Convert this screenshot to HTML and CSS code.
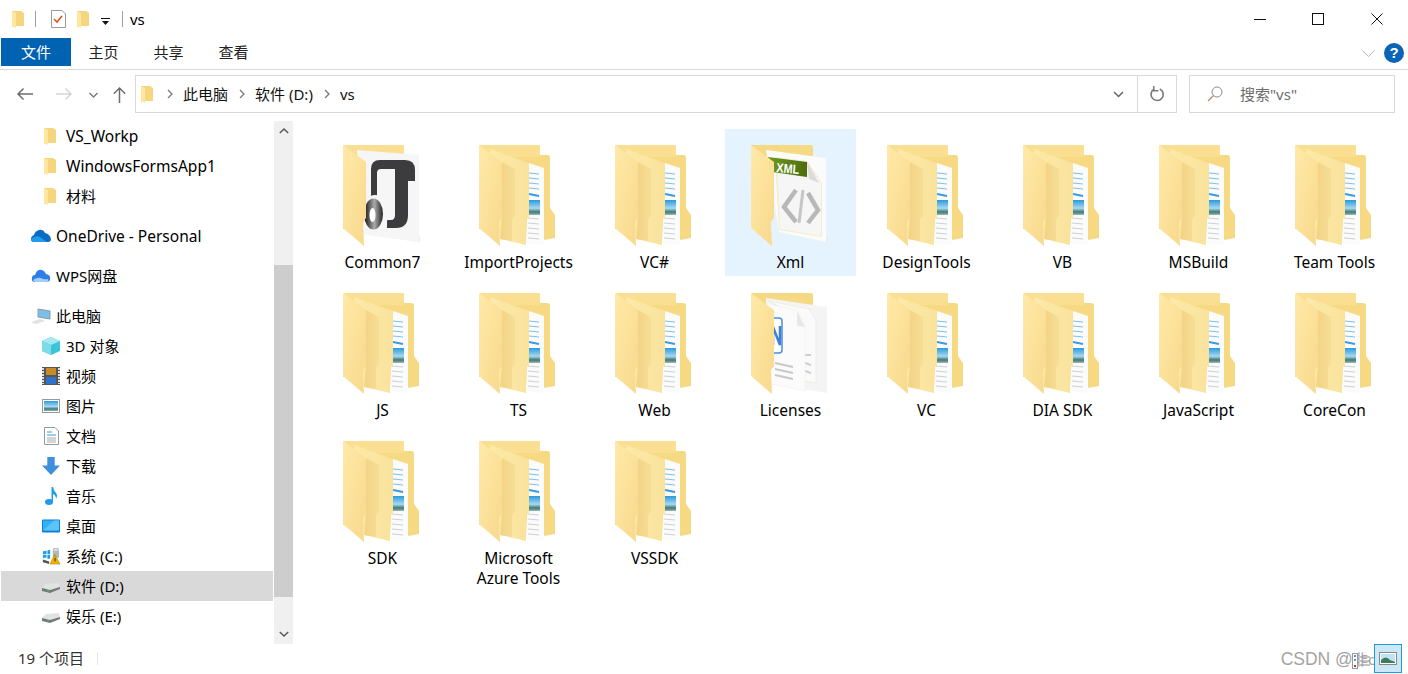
FILE: index.html
```html
<!DOCTYPE html>
<html lang="zh-CN">
<head>
<meta charset="utf-8">
<title>vs</title>
<link rel="stylesheet" href="styles.css">
</head>
<body>
<svg class="defs" width="0" height="0" aria-hidden="true">
  <defs>
    <linearGradient id="flap" x1="0" y1="0" x2="1" y2="1"><stop offset="0" stop-color="#ffeaa8"/><stop offset="1" stop-color="#f8d88c"/></linearGradient>
    <linearGradient id="mid" x1="0" y1="0" x2="1" y2="0"><stop offset="0" stop-color="#fdeaa9"/><stop offset="1" stop-color="#f9e29c"/></linearGradient>
    <linearGradient id="shade" x1="0" y1="0" x2="1" y2="0"><stop offset="0" stop-color="#f3d384"/><stop offset="1" stop-color="#f7dd96"/></linearGradient>
    <linearGradient id="sky" x1="0" y1="0" x2="0" y2="1"><stop offset="0" stop-color="#2a9ae0"/><stop offset=".55" stop-color="#a8d8ef"/><stop offset=".8" stop-color="#3e7a70"/><stop offset="1" stop-color="#9fb8c0"/></linearGradient>
    <linearGradient id="ring" x1="0" y1="0" x2="1" y2="0"><stop offset="0" stop-color="#111"/><stop offset=".55" stop-color="#aaa"/><stop offset="1" stop-color="#222"/></linearGradient>
    <linearGradient id="banner" x1="0" y1="0" x2="1" y2="0"><stop offset="0" stop-color="#6f9a22"/><stop offset="1" stop-color="#4c6c0e"/></linearGradient>
    <symbol id="flapshape" viewBox="0 0 77 102">
      <path d="M0 0 23 17V73L20 77 21 101 0 83Z" fill="url(#flap)"/>
    </symbol>
    <symbol id="backshape" viewBox="0 0 77 102">
      <path d="M0 0H60Q61 0 61 2V10H68Q71 10 71 13V63L76 70V93L65 95 40 90 0 84Z" fill="#f6d983"/>
      <path d="M0 0H60Q61 0 61 2V12H0Z" fill="#fadf93"/>
    </symbol>
    <symbol id="folder" viewBox="0 0 77 102">
      <use href="#backshape"/>
      <path d="M50 18 65 23V100L47 98Z" fill="#fbfbfb"/>
      <path d="M50 28 60 29M50 33 60 34M50 38 60 39M50 43 60 44" stroke="#7cc0ee" stroke-width="1"/>
      <path d="M50 49 60 51" stroke="#3a9ae6" stroke-width="2"/>
      <rect x="50" y="55" width="11" height="15" fill="url(#sky)"/>
      <path d="M49 73 60 74M49 78 60 79M49 83 60 84M49 88 60 89M49 93 60 94" stroke="#cdd0d4" stroke-width="1"/>
      <path d="M11 4 50 18V72L47 75V100L21 94Z" fill="url(#mid)"/>
      <path d="M23 17 36 24V70L33 75V96L21 94 23 73Z" fill="url(#shade)"/>
      <use href="#flapshape"/>
    </symbol>
    <symbol id="common" viewBox="0 0 77 102">
      <use href="#backshape"/>
      <path d="M20 89 76 97 86 93 70 90Z" fill="#ececec"/>
      <path d="M14 5 76 10V97L20 89Z" fill="#f6f6f7"/>
      <path d="M28 58V24Q28 15 37 15H62Q72 15 72 25V36H65V70Q65 83 53 83H44V75H48Q52 75 52 70V24H38Q34 24 34 28V58Z" fill="#3c3c3e"/>
      <ellipse cx="32" cy="69" rx="13" ry="19" fill="#f6f6f7"/>
      <ellipse cx="30.500" cy="69" rx="9.500" ry="15.500" fill="url(#ring)"/>
      <ellipse cx="29.500" cy="70" rx="3" ry="7" fill="#fff"/>
      <use href="#flapshape"/>
    </symbol>
    <symbol id="xmlfolder" viewBox="0 0 77 102">
      <path d="M0 0H60Q62 0 62 2V14L0 14Z" fill="#f6d983"/>
      <path d="M28 87 75 97 86 93 70 90Z" fill="#ececec"/>
      <path d="M15 5 75 13V97L28 87Z" fill="#fbfbfb"/>
      <path d="M24 12 56 16 71 38V92L28 85Z" fill="#f5eccb"/>
      <path d="M26 14 55 18 70 38V91L29 84Z" fill="#f6f6f6"/>
      <path d="M56 17 58 34 68 38Z" fill="#dcdcdc"/>
      <path d="M17 12 56 17V32L21 27Z" fill="url(#banner)"/>
      <text class="xml-text" x="25" y="27" textLength="23" lengthAdjust="spacingAndGlyphs" transform="rotate(5 25 27)">XML</text>
      <path d="M45 45 33 62 45 77M57 48 67 65 57 78" fill="none" stroke="#b8b8b8" stroke-width="4.500"/>
      <path d="M52 45 48 78" fill="none" stroke="#c6c6c6" stroke-width="3"/>
      <use href="#flapshape"/>
    </symbol>
    <symbol id="licfolder" viewBox="0 0 77 102">
      <path d="M0 0H60Q62 0 62 2V12H0Z" fill="#f6d983"/>
      <path d="M15 5 76 14V100L15 90Z" fill="#f4f4f5"/>
      <path d="M18 8 58 16 65 27V90L40 86V20Z" fill="#fafafa" stroke="#e9e3cf" stroke-width=".5"/>
      <path d="M54 62 60 62M54 70 60 72M54 78 60 80" stroke="#cfcfcf" stroke-width="2"/>
      <path d="M15 10 46 18 54 30V98L16 90Z" fill="#fbfbfb" stroke="#ececec" stroke-width=".5"/>
      <path d="M46 18 46 33 54 34Z" fill="#e8e8e8"/>
      <rect x="20" y="25" width="11" height="35" rx="3" fill="#fff" stroke="#4a8fe8" stroke-width="1.500"/>
      <path d="M22 52V34L29 52V33" fill="none" stroke="#3f7fd8" stroke-width="2.500"/>
      <path d="M24 70 42 74M24 76 42 80M24 82 42 86" stroke="#c8c8c8" stroke-width="2"/>
      <use href="#flapshape"/>
    </symbol>
    <symbol id="mini" viewBox="0 0 12 17">
      <path d="M0 0H9L12 2V15H3L0 16Z" fill="#f5d57e"/>
      <path d="M0 0 4 2V17L0 15Z" fill="#ffe7a0"/>
    </symbol>
    <symbol id="disk" viewBox="0 0 18 10">
      <path d="M0 5 4 1 17 0 18 5 5 9Z" fill="#e2e2e2"/>
      <path d="M0 5 8 7 18 4V6L8 10 0 8Z" fill="#777"/>
      <path d="M5 7.500 7 8" stroke="#3fb54a" stroke-width="1.500"/>
    </symbol>
  </defs>
</svg>

<header class="titlebar">
  <svg class="t-folder"><use href="#mini"/></svg>
  <span class="t-sep"></span>
  <svg class="t-doc" viewBox="0 0 15 18"><path d="M.5.500H11L14.500 4V17.500H.5Z" fill="#fff" stroke="#9a9a9a"/><path d="M3 9 6 12 11 6" fill="none" stroke="#e2541f" stroke-width="1.600"/></svg>
  <svg class="t-folder t-folder2"><use href="#mini"/></svg>
  <svg class="t-drop" viewBox="0 0 9 7"><path d="M0 0H9V1H0ZM1 3H8L4.500 7Z" fill="#111"/></svg>
  <span class="t-sep t-sep2"></span>
  <span class="t-name">vs</span>
  <div class="win">
    <svg class="w-min" viewBox="0 0 12 1"><path d="M0 .5H12" stroke="#111"/></svg>
    <svg class="w-max" viewBox="0 0 12 12"><rect x=".5" y=".5" width="11" height="11" fill="none" stroke="#111"/></svg>
    <svg class="w-close" viewBox="0 0 12 12"><path d="M.5.500 11.500 11.500M11.500.5.500 11.500" stroke="#111"/></svg>
  </div>
</header>

<nav class="ribbon">
  <span class="tab tab-file">文件</span>
  <span class="tab">主页</span>
  <span class="tab">共享</span>
  <span class="tab">查看</span>
  <div class="ribbon-right">
    <svg class="r-chev" viewBox="0 0 13 7"><path d="M.5.500 6.500 6.500 12.500.5" fill="none" stroke="#b5b5b5"/></svg>
    <span class="help">?</span>
  </div>
</nav>

<div class="addr-row">
  <div class="nav-btns">
    <svg class="n-back" viewBox="0 0 16 12"><path d="M1 6H16M6.500.5 1 6 6.500 11.500" fill="none" stroke="#6d6d6d" stroke-width="1.500"/></svg>
    <svg class="n-fwd" viewBox="0 0 16 12"><path d="M0 6H15M9.500.5 15 6 9.500 11.500" fill="none" stroke="#d6d6d6" stroke-width="1.500"/></svg>
    <svg class="n-down" viewBox="0 0 9 6"><path d="M.5 1 4.500 5 8.500 1" fill="none" stroke="#7b7b7b" stroke-width="1.500"/></svg>
    <svg class="n-up" viewBox="0 0 13 16"><path d="M6.500 16V1M.8 6.700 6.500 1 12.200 6.700" fill="none" stroke="#6d6d6d" stroke-width="1.500"/></svg>
  </div>
  <div class="addr">
    <svg class="a-folder"><use href="#mini"/></svg>
    <svg class="crumb-chev" viewBox="0 0 6 10"><path d="M1 1 5 5 1 9" fill="none" stroke="#777" stroke-width="1.300"/></svg>
    <span class="crumb">此电脑</span>
    <svg class="crumb-chev" viewBox="0 0 6 10"><path d="M1 1 5 5 1 9" fill="none" stroke="#777" stroke-width="1.300"/></svg>
    <span class="crumb">软件 (D:)</span>
    <svg class="crumb-chev" viewBox="0 0 6 10"><path d="M1 1 5 5 1 9" fill="none" stroke="#777" stroke-width="1.300"/></svg>
    <span class="crumb">vs</span>
    <svg class="a-drop" viewBox="0 0 11 7"><path d="M1 1 5.500 5.500 10 1" fill="none" stroke="#666" stroke-width="1.500"/></svg>
    <span class="a-refresh">
      <svg class="refresh" viewBox="0 0 16 16"><path d="M10.500 2.600A6.500 6.500 0 1 1 4.500 2.700" fill="none" stroke="#7c7c7c" stroke-width="1.800"/><path d="M4 0V5H9" fill="none" stroke="#7c7c7c" stroke-width="1.600" transform="translate(0 -.5)"/></svg>
    </span>
  </div>
  <div class="search">
    <svg class="s-icon" viewBox="0 0 16 16"><circle cx="10" cy="6" r="5" fill="none" stroke="#8e8e8e"/><path d="M6.500 9.500 1 15" stroke="#b88a5a" stroke-width="1.200"/></svg>
    <span>搜索"vs"</span>
  </div>
</div>

<main class="body">
  <aside class="side">
    <div class="tree">
      <div class="tree-group">
        <div class="row lvl2 latin"><svg class="i-mini"><use href="#mini"/></svg><span>VS_Workp</span></div>
        <div class="row lvl2 latin"><svg class="i-mini"><use href="#mini"/></svg><span>WindowsFormsApp1</span></div>
        <div class="row lvl2"><svg class="i-mini"><use href="#mini"/></svg><span>材料</span></div>
      </div>
      <div class="tree-group">
        <div class="row lvl1 latin"><svg class="i-l1" viewBox="0 0 20 14"><path d="M3 13Q0 13 0 10 0 7 3 6 4 2 8 1 12 0 14 4 19 5 20 10 20 13 17 13Z" fill="#0a6cc7"/><path d="M0 10Q4 6 9 8L16 13H3Q0 13 0 10Z" fill="#1f9de8"/></svg><span>OneDrive - Personal</span></div>
      </div>
      <div class="tree-group">
        <div class="row lvl1"><svg class="i-l1" viewBox="0 0 20 14"><path d="M4 13Q0 13 1 9 1 6 4 6 6 0 11 1 14 2 15 5 20 6 19 10 19 13 15 13Z" fill="#2f7ee8"/><path d="M2 11Q6 8 10 9 13 11 17 10 18 13 15 13H4Q3 13 2 11Z" fill="#9ed0fa"/></svg><span>WPS网盘</span></div>
      </div>
      <div class="tree-group">
        <div class="row lvl1"><svg class="i-l1 i-pc" viewBox="0 0 20 17"><path d="M7 1 19 3V11L7 9Z" fill="#7cc0e8" stroke="#8a9aa8"/><path d="M0 14 9 11 14 13 5 16Z" fill="#dfe2e6"/></svg><span>此电脑</span></div>
        <div class="row lvl2"><svg class="i-l2" viewBox="0 0 18 18"><path d="M9 0 18 4V14L9 18 0 14V4Z" fill="#3cc4d8"/><path d="M0 4 9 8 18 4 9 0Z" fill="#a4eaf2"/><path d="M9 8V18L0 14V4Z" fill="#7cdce8"/></svg><span>3D 对象</span></div>
        <div class="row lvl2"><svg class="i-l2" viewBox="0 0 18 18"><rect width="18" height="18" fill="#555"/><path d="M1 1V17M17 1V17" stroke="#ddd" stroke-width="2" stroke-dasharray="2 1"/><rect x="4" y="1" width="10" height="7" fill="#c98a2a"/><rect x="4" y="10" width="10" height="7" fill="#2f72c8"/></svg><span>视频</span></div>
        <div class="row lvl2"><svg class="i-l2 i-pic" viewBox="0 0 18 14"><rect x=".5" y=".5" width="17" height="13" fill="#fff" stroke="#999"/><rect x="2" y="2" width="14" height="10" fill="url(#sky)"/></svg><span>图片</span></div>
        <div class="row lvl2"><svg class="i-l2 i-doc" viewBox="0 0 15 18"><path d="M.5.500H11L14.500 4V17.500H.5Z" fill="#fff" stroke="#999"/><path d="M3 5H8M3 8H12" stroke="#3b9be0"/><path d="M3 11H12M3 13H12M3 15H12" stroke="#aaa"/></svg><span>文档</span></div>
        <div class="row lvl2"><svg class="i-l2" viewBox="0 0 17 17"><path d="M5 0H12V8H17L8.500 17 0 8H5Z" fill="#3f8fdf"/></svg><span>下载</span></div>
        <div class="row lvl2"><svg class="i-l2" viewBox="0 0 18 18"><ellipse cx="7" cy="15" rx="4" ry="3" fill="#1e9bee"/><path d="M9.500 15V0L11 0Q12 4 14 6T14 12Q14 8 11 7V15Z" fill="#1e9bee"/></svg><span>音乐</span></div>
        <div class="row lvl2"><svg class="i-l2 i-pic" viewBox="0 0 18 13"><rect width="18" height="13" rx="1" fill="#0a7fd8"/><rect x="1" y="1" width="16" height="10" fill="#32b0f2"/><path d="M1 11 12 1H17V11Z" fill="#5cc4f6"/></svg><span>桌面</span></div>
        <div class="row lvl2"><svg class="i-l2" viewBox="0 0 20 18"><path d="M1 4 5 3V7H1ZM6 3 9 2V7H6ZM1 8H5V11H1ZM6 8H9V12H6Z" fill="#1ba1e2"/><path d="M1 13 8 15V18L1 16Z" fill="#555"/><rect x="12" y="3" width="7" height="8" rx="1" fill="#b0b8c0"/><path d="M13 3V1H18V3" fill="none" stroke="#999"/><path d="M14 7 20 18H9Z" fill="#f0b400" stroke="#8a6a00" stroke-width=".5"/><path d="M14.500 11V15" stroke="#222"/></svg><span>系统 (C:)</span></div>
        <div class="row lvl2 row-sel"><svg class="i-l2 i-disk"><use href="#disk"/></svg><span>软件 (D:)</span></div>
        <div class="row lvl2"><svg class="i-l2 i-disk"><use href="#disk"/></svg><span>娱乐 (E:)</span></div>
      </div>
    </div>
    <div class="scrollbar">
      <svg class="sb-arrow" viewBox="0 0 10 6"><path d="M.8 5 5 1 9.200 5" fill="none" stroke="#5c5c5c" stroke-width="1.600"/></svg>
      <div class="sb-track"><div class="sb-thumb"></div></div>
      <svg class="sb-arrow" viewBox="0 0 10 6"><path d="M.8 1 5 5 9.200 1" fill="none" stroke="#5c5c5c" stroke-width="1.600"/></svg>
    </div>
  </aside>
  <section class="files">
    <div class="tile"><svg class="ficon"><use href="#common"/></svg><span>Common7</span></div>
    <div class="tile"><svg class="ficon"><use href="#folder"/></svg><span>ImportProjects</span></div>
    <div class="tile"><svg class="ficon"><use href="#folder"/></svg><span>VC#</span></div>
    <div class="tile tile-hover"><svg class="ficon"><use href="#xmlfolder"/></svg><span>Xml</span></div>
    <div class="tile"><svg class="ficon"><use href="#folder"/></svg><span>DesignTools</span></div>
    <div class="tile"><svg class="ficon"><use href="#folder"/></svg><span>VB</span></div>
    <div class="tile"><svg class="ficon"><use href="#folder"/></svg><span>MSBuild</span></div>
    <div class="tile"><svg class="ficon"><use href="#folder"/></svg><span>Team Tools</span></div>
    <div class="tile"><svg class="ficon"><use href="#folder"/></svg><span>JS</span></div>
    <div class="tile"><svg class="ficon"><use href="#folder"/></svg><span>TS</span></div>
    <div class="tile"><svg class="ficon"><use href="#folder"/></svg><span>Web</span></div>
    <div class="tile"><svg class="ficon"><use href="#licfolder"/></svg><span>Licenses</span></div>
    <div class="tile"><svg class="ficon"><use href="#folder"/></svg><span>VC</span></div>
    <div class="tile"><svg class="ficon"><use href="#folder"/></svg><span>DIA SDK</span></div>
    <div class="tile"><svg class="ficon"><use href="#folder"/></svg><span>JavaScript</span></div>
    <div class="tile"><svg class="ficon"><use href="#folder"/></svg><span>CoreCon</span></div>
    <div class="tile"><svg class="ficon"><use href="#folder"/></svg><span>SDK</span></div>
    <div class="tile"><svg class="ficon"><use href="#folder"/></svg><span>Microsoft<br>Azure Tools</span></div>
    <div class="tile"><svg class="ficon"><use href="#folder"/></svg><span>VSSDK</span></div>
  </section>
</main>

<footer class="status">
  <span class="count">19 个项目</span>
  <span class="st-sep"></span>
  <div class="st-right">
    <span class="mark">CSDN @</span>
    <span class="mark2">非o.岳</span>
    <svg class="v-detail" viewBox="0 0 18 16"><rect x=".5" y=".5" width="5" height="15" fill="#fff" stroke="#999"/><path d="M2 3H4M2 7H4" stroke="#2a6fc0" stroke-width="1.500"/><path d="M2 13H4" stroke="#d03020" stroke-width="2"/><path d="M8 4H18M8 8H18M8 12H18" stroke="#8a8a8a"/></svg>
    <span class="v-large"><svg viewBox="0 0 18 13"><rect x=".5" y=".5" width="17" height="12" fill="#fff" stroke="#888"/><path d="M2 2H16V11H2Z" fill="#bfe3f3"/><path d="M2 8Q7 3 11 8L16 10V11H2Z" fill="#3f7a5c"/></svg></span>
  </div>
</footer>
</body>
</html>
```
FILE: styles.css
```css
* { box-sizing: border-box; }
html, body { margin: 0; height: 100%; }
body {
  width: 1408px;
  height: 674px;
  overflow: hidden;
  background: #fff;
  color: #000;
  font: 15px/20px "Noto Sans", "Noto Sans CJK SC", sans-serif;
  display: flex;
  flex-direction: column;
}
svg { display: block; flex: none; overflow: visible; }
.defs { position: absolute; }
.xml-text { font: bold 13px "Liberation Sans", sans-serif; fill: #fff; }

.titlebar { height: 38px; flex: none; display: flex; align-items: center; padding: 0 0 0 12px; }
.t-folder { width: 12px; height: 17px; }
.t-sep { width: 1px; height: 16px; background: #a0a0a0; margin: 0 15px 0 11px; }
.t-doc { width: 15px; height: 18px; }
.t-folder2 { margin-left: 11px; }
.t-drop { width: 9px; height: 7px; margin-left: 12px; margin-top: 4px; }
.t-sep2 { margin: 0 7px 0 12px; }
.win { margin-left: auto; display: flex; align-items: center; padding-right: 25px; }
.w-min { width: 12px; height: 1px; }
.w-max { width: 12px; height: 12px; margin-left: 46px; }
.w-close { width: 12px; height: 12px; margin-left: 47px; }

.ribbon { height: 32px; flex: none; display: flex; align-items: flex-start; padding-left: 1px; border-bottom: 1px solid #dadada; }
.tab { width: 65px; height: 28px; display: flex; align-items: center; justify-content: center; color: #222; }
.tab-file { width: 70px; background: #0063b1; color: #fff; }
.ribbon-right { margin-left: auto; display: flex; align-items: center; padding: 4px 4px 0 0; height: 26px; }
.r-chev { width: 13px; height: 7px; margin-right: 9px; }
.help { width: 20px; height: 20px; border-radius: 50%; background: #0a64b8; color: #fff; font: bold 15px/20px "Liberation Sans", sans-serif; text-align: center; }

.addr-row { height: 51px; flex: none; display: flex; align-items: flex-start; padding-top: 5px; }
.nav-btns { width: 135px; height: 38px; flex: none; display: flex; align-items: center; padding-left: 17px; }
.n-back, .n-fwd { width: 16px; height: 12px; }
.n-fwd { margin-left: 23px; }
.n-down { width: 9px; height: 6px; margin-left: 17px; margin-top: 1px; }
.n-up { width: 13px; height: 16px; margin-left: 15px; margin-top: 1px; }
.addr { width: 1042px; height: 38px; flex: none; border: 1px solid #d9d9d9; display: flex; align-items: center; padding-left: 5px; }
.a-folder { width: 12px; height: 17px; margin-right: 14px; }
.crumb-chev { width: 6px; height: 10px; }
.crumb { margin: 0 11px 0 10px; color: #111; }
.a-drop { width: 11px; height: 7px; margin-left: auto; margin-right: 13px; }
.a-refresh { width: 39px; height: 36px; border-left: 1px solid #d9d9d9; display: flex; align-items: center; justify-content: center; }
.refresh { width: 15px; height: 16px; }
.search { width: 206px; height: 38px; flex: none; margin-left: 12px; border: 1px solid #d9d9d9; display: flex; align-items: center; padding-left: 17px; color: #6d6d6d; }
.s-icon { width: 16px; height: 16px; margin-right: 17px; }

.body { height: 523px; flex: none; display: flex; }
.side { width: 295px; flex: none; display: flex; padding-left: 1px; }
.tree { width: 272px; flex: none; display: flex; flex-direction: column; gap: 10px; }
.row { height: 30px; display: flex; align-items: center; }
.row span { white-space: nowrap; }
.latin { font-size: 15.500px; }
.lvl2 { padding-left: 41px; }
.lvl2 span { margin-left: 6px; }
.lvl1 span { margin-left: 5px; }
.lvl1 { padding-left: 30px; }
.row-sel { background: #d9d9d9; }
.i-mini { width: 12px; height: 17px; margin-left: 2px; margin-right: 4px; }
.i-l1 { width: 20px; height: 14px; }
.i-pc { height: 17px; }
.i-l2 { width: 18px; height: 18px; }
.i-pic { height: 14px; }
.i-doc { width: 15px; margin-left: 2px; margin-right: 1px; }
.i-disk { height: 10px; margin-top: 4px; }
.scrollbar { width: 19px; flex: none; margin-left: 1px; display: flex; flex-direction: column; background: #f0f0f0; }
.sb-arrow { width: 10px; height: 6px; margin: 7px auto; }
.sb-track { flex: 1; padding-top: 124px; padding-bottom: 27px; }
.sb-thumb { height: 100%; background: #cdcdcd; }

.files { flex: 1; padding: 8px 0 0 22px; display: grid; grid-template-columns: repeat(8, 131px); column-gap: 5px; grid-auto-rows: 147px; row-gap: 1px; align-content: start; font-size: 15.500px; }
.tile { display: flex; flex-direction: column; align-items: center; text-align: center; padding-top: 16px; }
.tile-hover { background: #e5f3ff; }
.ficon { width: 77px; height: 102px; margin: 0 2px 5px 0; }

.status { flex: 1; display: flex; align-items: flex-start; padding: 4px 0 0 18px; color: #333; }
.count { width: 79px; }
.st-sep { width: 1px; height: 13px; background: #e6e6e6; margin-top: 4px; }
.st-right { margin-left: auto; display: flex; align-items: center; height: 28px; padding-right: 6px; margin-top: -4px; }
.mark { color: #a4a4a4; font: 17.500px "Liberation Sans", sans-serif; white-space: nowrap; margin-top: 2px; }
.mark2 { color: #a4a4a4; white-space: nowrap; margin-top: 2px; }
.v-detail { width: 18px; height: 16px; margin-left: -44px; margin-right: 4px; margin-top: 6px; }
.v-large { width: 28px; height: 29px; border: 1px solid #1e9ce0; background: #cce8f6; display: flex; align-items: center; justify-content: center; }
.v-large svg { width: 18px; height: 13px; }
```
